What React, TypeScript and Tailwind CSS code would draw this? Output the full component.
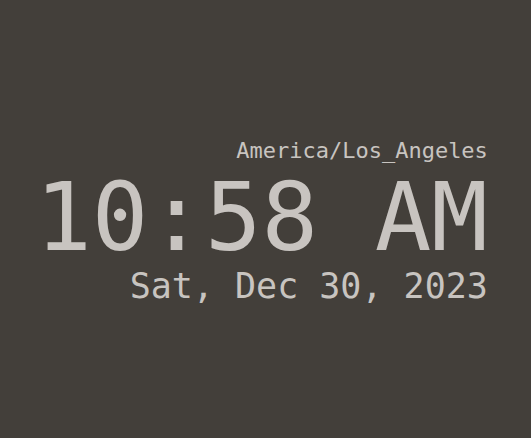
export default function App() {
  return (
    <div className="flex h-[438px] w-full items-center justify-center bg-[#433f3a] pr-2 text-[#c8c4c0]" style={{ fontFamily: '"DejaVu Sans Mono", monospace' }}>
      <div className="flex flex-col items-end">
        <div className="text-[22px] leading-[34px]">America/Los_Angeles</div>
        <div className="text-[94px] leading-[100px]">10:58 AM</div>
        <div className="text-[35px] leading-[37px]">Sat, Dec 30, 2023</div>
      </div>
    </div>
  );
}
